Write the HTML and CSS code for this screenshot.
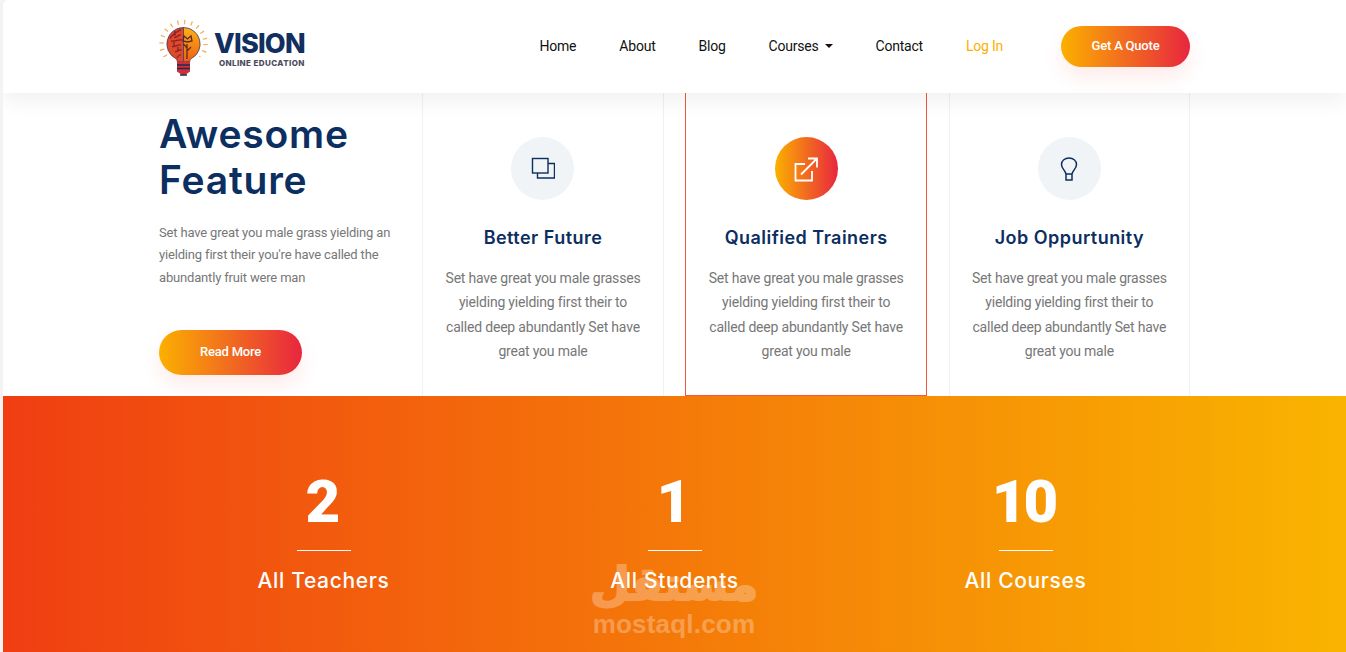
FILE: index.html
```html
<!DOCTYPE html>
<html lang="en">
<head>
    <meta charset="UTF-8">
    <meta name="viewport" content="width=device-width, initial-scale=1.0">
    <title>Vision Online Education</title>
    <link rel="stylesheet" href="styles.css">
</head>
<body>
    <div class="page">
        <!-- Header -->
        <header class="site-header">
            <a class="logo" href="#">
                <svg class="logo-mark" width="50" height="60" viewBox="0 0 50 60">
                    <defs>
                        <linearGradient id="bulb-fill" x1="0" y1="0" x2="0" y2="1">
                            <stop offset="0" stop-color="#fbb21a"/>
                            <stop offset="1" stop-color="#ef5f12"/>
                        </linearGradient>
                        <clipPath id="ray-clip">
                            <rect x="0" y="0" width="50" height="40"/>
                        </clipPath>
                    </defs>
                    <circle cx="24.500" cy="27" r="22" fill="none" stroke="#f2b06a" stroke-width="4.500" stroke-dasharray="1.300 5.610" clip-path="url(#ray-clip)"/>
                    <path d="M24.500 10.500a16.500 16.500 0 0 1 8 31c-1.300.8-1.700 1.800-1.700 3H24.500z" fill="url(#bulb-fill)"/>
                    <path d="M24.500 10.500a16.500 16.500 0 0 0-8 31c1.300.8 1.700 1.800 1.700 3h6.300z" fill="#dc4a2a"/>
                    <g fill="none" stroke="#8c1f28" stroke-width="1.300">
                        <path d="M22 13c-3 0-3 3-6 2.500-1 2.500-4 3-5 6M22 18c-3-.5-4 3-7 2.500M23 23c-4-1-6 2-11 1M16 14v5M22 28c-3-1-5 2-9 1.500M15 24v5M23 33c-3-1-4 2-7 1.500M22 38c-2-1-3 1-4 3M19 30v4"/>
                    </g>
                    <path d="M28 42V27M25 19l3.500 3 3.500-3 1 5-4.500 1-4.500-1zM28 31l-3.500-4M28 34l4-4" fill="none" stroke="#5e2a20" stroke-width="1.300"/>
                    <path d="M24.500 10.500a16.500 16.500 0 0 1 8 31c-1.300.8-1.700 1.800-1.700 3H18.200c0-1.200-.4-2.200-1.700-3a16.500 16.500 0 0 1 8-31zM24.500 10.500v34" fill="none" stroke="#2a2a55" stroke-width="0.700"/>
                    <path d="M18 44.500h13v10l-3.500 2.500a5 5 0 0 1-6 0L18 54.500z" fill="#cf2f35"/>
                    <path d="M18 48h13M18 51.500h13M21 58h7" stroke="#1d2c55" stroke-width="1.300"/>
                </svg>
                <span class="logo-text">
                    <strong>VISION</strong>
                    <small>ONLINE EDUCATION</small>
                </span>
            </a>
            <nav class="main-nav">
                <a href="#">Home</a>
                <a href="#">About</a>
                <a href="#">Blog</a>
                <a href="#" class="has-caret">Courses</a>
                <a href="#">Contact</a>
                <a href="#" class="login">Log In</a>
            </nav>
            <a href="#" class="btn-gradient btn-quote">Get A Quote</a>
        </header>

        <!-- Features -->
        <section class="features">
            <div class="intro">
                <h1>Awesome Feature</h1>
                <p>Set have great you male grass yielding an yielding first their you're have called the abundantly fruit were man</p>
                <a href="#" class="btn-gradient btn-more">Read More</a>
            </div>
            <div class="card">
                <div class="card-icon">
                    <svg width="24" height="24" viewBox="0 0 24 24" fill="none" stroke="#0c2e60" stroke-width="1.400">
                        <rect x="1.500" y="1.500" width="15.500" height="14.500"/>
                        <path d="M6.500 16v5h17V6.500H17"/>
                    </svg>
                </div>
                <h3>Better Future</h3>
                <p>Set have great you male grasses yielding yielding first their to called deep abundantly Set have great you male</p>
            </div>
            <div class="card card-active">
                <div class="card-icon">
                    <svg width="26" height="26" viewBox="0 0 26 26" fill="none" stroke="#fff" stroke-width="1.800">
                        <path d="M12 8H2.500v16.500h16.500V15M8 18.500L23.500 3M15 2.500h9v9"/>
                    </svg>
                </div>
                <h3>Qualified Trainers</h3>
                <p>Set have great you male grasses yielding yielding first their to called deep abundantly Set have great you male</p>
            </div>
            <div class="card">
                <div class="card-icon">
                    <svg width="24" height="24" viewBox="0 0 24 24" fill="none" stroke="#0c2e60" stroke-width="1.500">
                        <path d="M9 17C8 13 4.500 11.500 4.500 7.500 4.500 3.500 8 1 12 1s7.500 2.500 7.500 6.500C19.500 11.500 16 13 15 17zM9 17h6v6H9z"/>
                    </svg>
                </div>
                <h3>Job Oppurtunity</h3>
                <p>Set have great you male grasses yielding yielding first their to called deep abundantly Set have great you male</p>
            </div>
        </section>

        <!-- Counters -->
        <section class="stats">
            <div class="stat">
                <div class="stat-num">2</div>
                <div class="stat-line"></div>
                <div class="stat-label">All Teachers</div>
            </div>
            <div class="stat">
                <div class="stat-num">1</div>
                <div class="stat-line"></div>
                <div class="stat-label">All Students</div>
            </div>
            <div class="stat">
                <div class="stat-num">10</div>
                <div class="stat-line"></div>
                <div class="stat-label">All Courses</div>
            </div>
            <div class="watermark">
                <span class="wm-ar" lang="ar" dir="rtl">مستقل</span>
                <span class="wm-en">mostaql.com</span>
            </div>
        </section>
    </div>
</body>
</html>
```

FILE: styles.css
```css
* {
    box-sizing: border-box;
}
html, body {
    height: 100%;
}
body {
    margin: 0;
    background-color: #f3f3f3;
    font-family: Roboto, Arial, sans-serif;
    overflow: hidden;
}
a {
    text-decoration: none;
}
.page {
    height: 652px;
    margin-left: 3px;
    border-top-left-radius: 6px;
    overflow: hidden;
    background: #fff;
    display: flex;
    flex-direction: column;
}

/* Header */
.site-header {
    position: relative;
    z-index: 2;
    flex: none;
    height: 93px;
    padding: 0 156px;
    display: flex;
    align-items: center;
    background: #fff;
    box-shadow: 0 8px 20px rgba(0, 0, 0, 0.06);
}
.logo {
    display: flex;
    align-items: center;
    gap: 5px;
    margin-right: auto;
}
.logo-text {
    padding-top: 6px;
    display: flex;
    flex-direction: column;
    align-items: flex-end;
}
.logo-text strong {
    font-family: Inter, Arial, sans-serif;
    font-size: 27px;
    font-weight: 800;
    line-height: 27px;
    letter-spacing: -0.8px;
    color: #12305f;
}
.logo-text small {
    font-family: Inter, Arial, sans-serif;
    font-size: 8px;
    font-weight: 800;
    line-height: 12px;
    letter-spacing: 0.4px;
    color: #4c4c5c;
}
.main-nav {
    display: flex;
    gap: 43px;
    padding-bottom: 2px;
    font-size: 14px;
    letter-spacing: -0.22px;
}
.main-nav a {
    color: #111;
}
.main-nav .login {
    color: #fbb000;
}
.has-caret::after {
    content: "";
    display: inline-block;
    margin-left: 6px;
    vertical-align: 3px;
    border-top: 4px solid #111;
    border-left: 4px solid transparent;
    border-right: 4px solid transparent;
}
.btn-gradient {
    display: flex;
    align-items: center;
    justify-content: center;
    padding-bottom: 2px;
    color: #fff;
    font-size: 13px;
    font-weight: 500;
    letter-spacing: -0.2px;
    border-radius: 30px;
    background: linear-gradient(90deg, #fbb000, #e8263f);
    box-shadow: 0 10px 20px rgba(232, 60, 40, 0.1);
}
.btn-quote {
    width: 129px;
    height: 41px;
    margin-left: 58px;
}
.btn-more {
    width: 143px;
    height: 45px;
}

/* Features */
.features {
    flex: none;
    height: 303px;
    padding: 0 156px;
    display: grid;
    grid-template-columns: repeat(4, 241.600px);
    gap: 21.600px;
}
.intro {
    padding-top: 18px;
}
.intro h1 {
    margin: 0;
    font-family: Inter, Arial, sans-serif;
    font-size: 39px;
    font-weight: 600;
    line-height: 46px;
    letter-spacing: 0.8px;
    color: #0c2e60;
}
.intro p {
    margin: 19px 0 41px;
    font-size: 13px;
    line-height: 22.400px;
    letter-spacing: -0.17px;
    color: #777;
}
.card {
    padding-top: 44px;
    text-align: center;
    border: 1px solid #eef2f5;
    border-top: none;
    border-bottom: none;
}
.card-icon {
    width: 63px;
    height: 63px;
    margin: 0 auto;
    border-radius: 50%;
    display: flex;
    align-items: center;
    justify-content: center;
    background: #f0f4f7;
}
.card h3 {
    margin: 25px 0 15px;
    font-family: Inter, Arial, sans-serif;
    font-size: 18px;
    font-weight: 600;
    line-height: 26px;
    letter-spacing: 0.47px;
    color: #0c2e60;
}
.card p {
    margin: 0;
    padding: 0 20px;
    font-size: 14px;
    line-height: 24.400px;
    letter-spacing: -0.2px;
    color: #777;
}
.card-active {
    border: 1px solid #f0583c;
    border-top: none;
}
.card-active .card-icon {
    background: linear-gradient(90deg, #fbb000, #e8263f);
}

/* Counters */
.stats {
    position: relative;
    flex: 1;
    padding: 73px 145px 0;
    display: grid;
    grid-template-columns: repeat(3, 351px);
    justify-content: center;
    align-items: start;
    text-align: center;
    color: #fff;
    background: linear-gradient(90deg, #f03e12, #f9b400);
}
.stat-num {
    padding-right: 4px;
    font-size: 60px;
    font-weight: 900;
    line-height: 66px;
    letter-spacing: -3px;
}
.stat-line {
    width: 54px;
    height: 1px;
    margin: 15px auto 16px;
    background: #fff;
}
.stat-label {
    font-family: Inter, Arial, sans-serif;
    font-size: 21px;
    font-weight: 500;
    line-height: 28px;
    letter-spacing: 0.65px;
}
.watermark {
    position: absolute;
    left: 588px;
    top: 162px;
    width: 166px;
    display: flex;
    flex-direction: column;
    align-items: center;
    color: #fff;
    opacity: 0.28;
}
.wm-ar {
    font-family: "DejaVu Sans", sans-serif;
    font-size: 46px;
    font-weight: 700;
    line-height: 52px;
    -webkit-text-stroke: 2px #fff;
}
.wm-en {
    font-family: "Liberation Sans", Arial, sans-serif;
    font-size: 26px;
    font-weight: 700;
    line-height: 28px;
    letter-spacing: 0.2px;
}
```
